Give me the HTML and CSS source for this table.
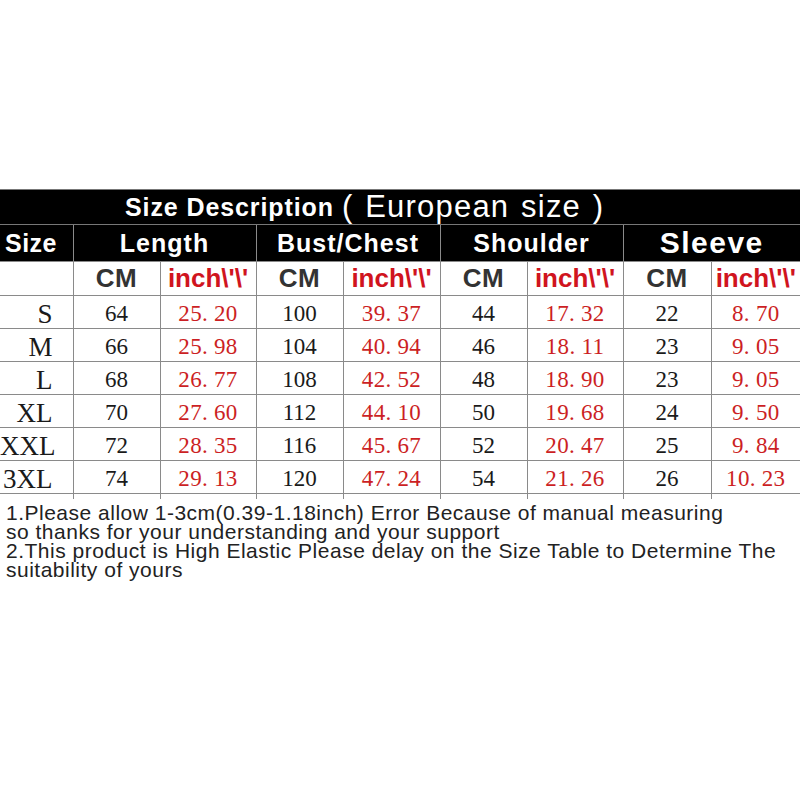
FILE: index.html
```html
<!DOCTYPE html>
<html>
<head>
<meta charset="utf-8">
<link rel="stylesheet" href="styles.css">
</head>
<body>
<div class="page">
  <div class="title"><span class="title-bold">Size Description</span><span class="title-reg">( European size )</span></div>
  <table class="chart">
    <colgroup>
      <col class="c0"><col class="c1"><col class="c2"><col class="c3"><col class="c4"><col class="c5"><col class="c6"><col class="c7"><col class="c8">
    </colgroup>
    <tr class="head">
      <th class="size-h">Size</th>
      <th colspan="2">Length</th>
      <th colspan="2">Bust/Chest</th>
      <th colspan="2">Shoulder</th>
      <th colspan="2" class="sleeve">Sleeve</th>
    </tr>
    <tr class="units">
      <td></td>
      <td class="cm">CM</td><td class="in">inch\'\'</td>
      <td class="cm">CM</td><td class="in">inch\'\'</td>
      <td class="cm">CM</td><td class="in">inch\'\'</td>
      <td class="cm">CM</td><td class="in">inch\'\'</td>
    </tr>
    <tr class="row">
      <td class="sz">S</td><td>64</td><td class="r">25. 20</td><td>100</td><td class="r">39. 37</td><td>44</td><td class="r">17. 32</td><td>22</td><td class="r">8. 70</td>
    </tr>
    <tr class="row">
      <td class="sz">M</td><td>66</td><td class="r">25. 98</td><td>104</td><td class="r">40. 94</td><td>46</td><td class="r">18. 11</td><td>23</td><td class="r">9. 05</td>
    </tr>
    <tr class="row">
      <td class="sz">L</td><td>68</td><td class="r">26. 77</td><td>108</td><td class="r">42. 52</td><td>48</td><td class="r">18. 90</td><td>23</td><td class="r">9. 05</td>
    </tr>
    <tr class="row">
      <td class="sz">XL</td><td>70</td><td class="r">27. 60</td><td>112</td><td class="r">44. 10</td><td>50</td><td class="r">19. 68</td><td>24</td><td class="r">9. 50</td>
    </tr>
    <tr class="row">
      <td class="sz">XXL</td><td>72</td><td class="r">28. 35</td><td>116</td><td class="r">45. 67</td><td>52</td><td class="r">20. 47</td><td>25</td><td class="r">9. 84</td>
    </tr>
    <tr class="row">
      <td class="sz">3XL</td><td>74</td><td class="r">29. 13</td><td>120</td><td class="r">47. 24</td><td>54</td><td class="r">21. 26</td><td>26</td><td class="r">10. 23</td>
    </tr>
    <tr class="tail">
      <td></td><td></td><td></td><td></td><td></td><td></td><td></td><td></td><td></td>
    </tr>
  </table>
  <div class="notes">
    <p>1.Please allow 1-3cm(0.39-1.18inch) Error Because of manual measuring</p>
    <p>so thanks for your understanding and your support</p>
    <p>2.This product is High Elastic Please delay on the Size Table to Determine The</p>
    <p>suitability of yours</p>
  </div>
</div>
</body>
</html>
```

FILE: styles.css
```css
html, body {
  margin: 0;
  padding: 0;
  background: #fff;
}

.page {
  width: 800px;
  padding-top: 189px;
}

.title {
  height: 34px;
  background: #000;
  border-top: 1px solid #777;
  border-bottom: 1px solid #777;
  color: #fff;
  padding-left: 125px;
  display: flex;
  align-items: center;
  white-space: nowrap;
  font-family: "Liberation Sans", Arial, sans-serif;
}

.title-bold {
  font-weight: bold;
  font-size: 25px;
  letter-spacing: 0.9px;
  margin-right: 8px;
}

.title-reg {
  font-size: 31px;
  letter-spacing: 1.2px;
  word-spacing: 2px;
}

.chart {
  border-collapse: collapse;
  table-layout: fixed;
  width: 800px;
}

.c0 { width: 73px; }
.c1 { width: 87px; }
.c2 { width: 96px; }
.c3 { width: 87px; }
.c4 { width: 97px; }
.c5 { width: 87px; }
.c6 { width: 96px; }
.c7 { width: 88px; }
.c8 { width: 89px; }

.chart td, .chart th {
  border: 1px solid #8a8a8a;
  padding: 0;
  text-align: center;
  white-space: nowrap;
  overflow: hidden;
}

.chart tr > :first-child { border-left: none; }
.chart tr > :last-child { border-right: none; }

.head th {
  background: #000;
  color: #fff;
  height: 36px;
  font-family: "Liberation Sans", Arial, sans-serif;
  font-weight: bold;
  font-size: 25px;
  letter-spacing: 1px;
  border-top: none;
}

.head .size-h {
  text-align: left;
  padding-left: 5px;
  letter-spacing: 0.5px;
}

.head .sleeve {
  font-size: 30px;
  letter-spacing: 1.5px;
}

.units td {
  height: 33px;
  font-family: "Liberation Sans", Arial, sans-serif;
  font-weight: bold;
  font-size: 26px;
}

.units .cm { color: #333; letter-spacing: 0.5px; }
.units .in { color: #d0141e; }

.row td {
  height: 29px;
  line-height: 26px;
  font-family: "Liberation Serif", "Times New Roman", serif;
  font-size: 23px;
  color: #1a1a1a;
  padding-top: 3px;
}

.row td.r {
  color: #cc1f24;
  letter-spacing: 0.3px;
}

.row td.sz {
  font-size: 27px;
  text-align: right;
  padding-right: 20px;
}

.tail td {
  height: 5px;
  border-bottom: none;
}

.notes {
  padding: 4px 0 12px 6px;
  font-family: "Liberation Sans", Arial, sans-serif;
  font-size: 21px;
  letter-spacing: 0.5px;
  line-height: 19px;
  color: #222;
  white-space: nowrap;
}

.notes p {
  margin: 0;
}
```
